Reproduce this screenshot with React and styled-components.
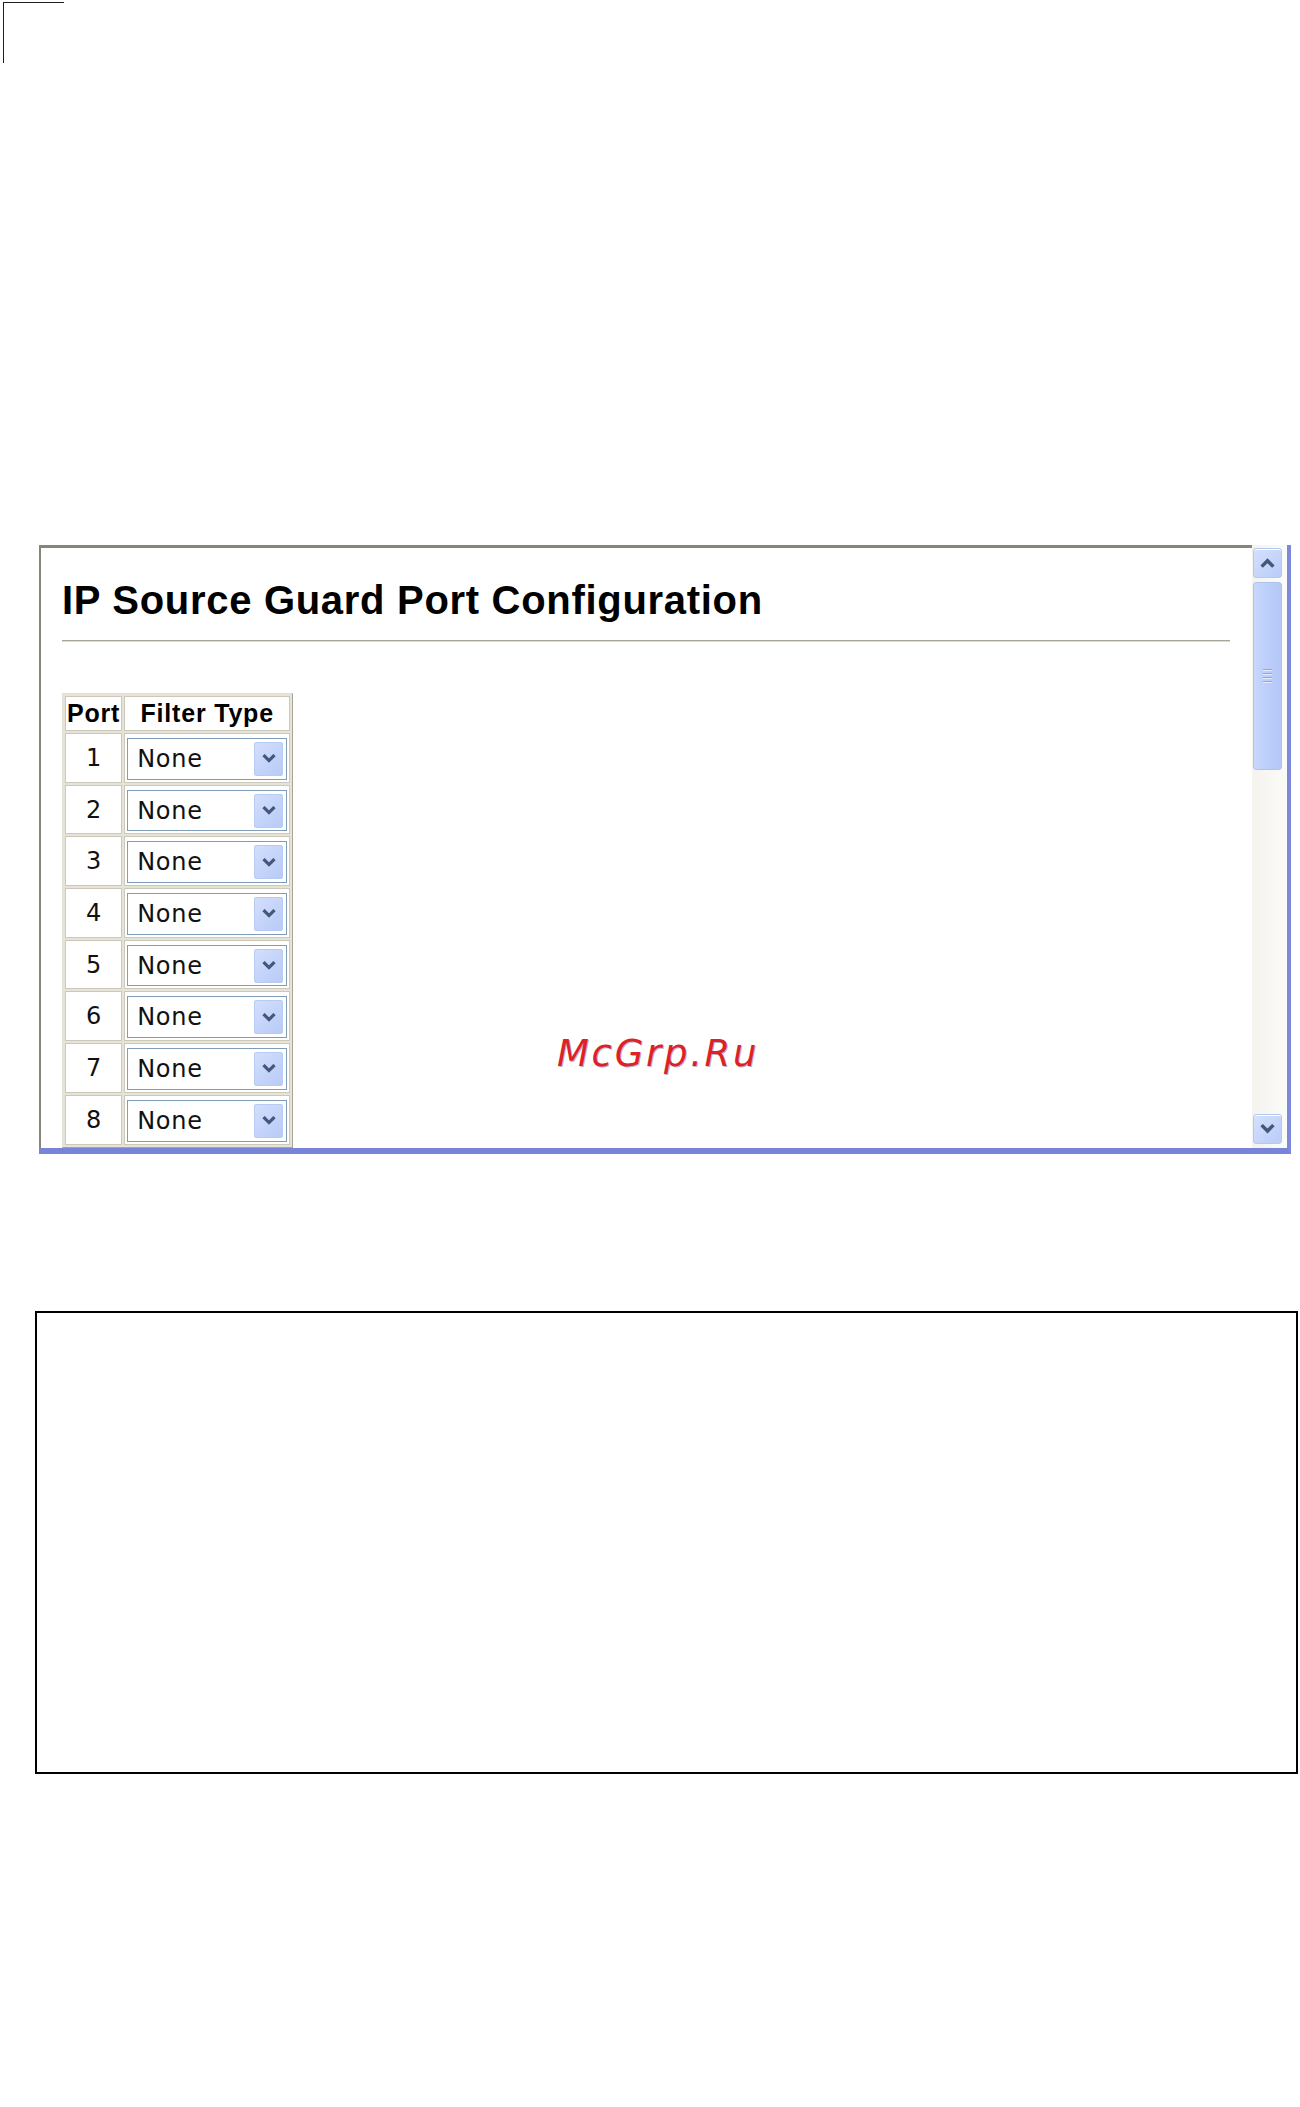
import React from "react";
import styled, { createGlobalStyle } from "styled-components";

const GlobalStyle = createGlobalStyle`
	html, body {
		margin: 0;
		padding: 0;
		background: #ffffff;
	}
	body {
		font-family: "Liberation Sans", Arial, sans-serif;
	}
`;

const ports = [1, 2, 3, 4, 5, 6, 7, 8];

const Chevron = ({ up, size = 15 }) => (
	<svg width={size} height={size * 0.65} viewBox="0 0 14 9">
		<polyline
			points={up ? "1.5,8 7,2.5 12.5,8" : "1.5,1 7,6.5 12.5,1"}
			fill="none"
			stroke="#45577a"
			strokeWidth="3.2"
		/>
	</svg>
);

const App = () => {
	return (
		<Page>
			<GlobalStyle />
			<CropMark />

			<Panel>
				<Viewport>
					<Title>IP Source Guard Port Configuration</Title>
					<Rule />

					<Grid>
						<thead>
							<tr>
								<HeadCell>Port</HeadCell>
								<HeadCell>Filter Type</HeadCell>
							</tr>
						</thead>
						<tbody>
							{ports.map((port) => (
								<tr key={port}>
									<PortCell>{port}</PortCell>
									<SelectCell>
										<Select>
											<span>None</span>
											<DropButton>
												<Chevron size={14} />
											</DropButton>
										</Select>
									</SelectCell>
								</tr>
							))}
						</tbody>
					</Grid>
				</Viewport>

				<Scrollbar>
					<ScrollButton>
						<Chevron up />
					</ScrollButton>
					<Thumb>
						<Grip>
							<i />
							<i />
							<i />
							<i />
						</Grip>
					</Thumb>
					<Track />
					<ScrollButton>
						<Chevron />
					</ScrollButton>
				</Scrollbar>

				<Watermark>McGrp.Ru</Watermark>
			</Panel>

			<NoteBox />
		</Page>
	);
};

// # STYLED COMPONENTS

const Page = styled.div`
	position: relative;
	width: 1300px;
	min-height: 2107px;
	overflow: hidden;
`;

const CropMark = styled.div`
	width: 60px;
	height: 60px;
	margin: 2px 0 0 3px;
	border-top: 1px solid #231f20;
	border-left: 1px solid #231f20;
`;

const Panel = styled.div`
	position: relative;
	display: flex;
	box-sizing: border-box;
	width: 1252px;
	height: 609px;
	margin: 482px 0 0 39px;
	border-right: 4px solid #7d89dc;
	border-bottom: 6px solid #7784d8;
	box-shadow: inset 0 -1px 0 #aab2ee;
`;

const Viewport = styled.div`
	flex: 1;
	overflow: hidden;
	padding: 0 22px 0 21px;
	border-top: 3px solid #87857a;
	border-left: 2px solid #87857a;
	background: #ffffff;
`;

const Title = styled.h1`
	margin: 32px 0 0;
	font-family: "Liberation Sans", Arial, sans-serif;
	font-size: 40px;
	line-height: 1;
	font-weight: bold;
	letter-spacing: 0.7px;
	color: #000000;
	white-space: nowrap;
`;

const Rule = styled.div`
	height: 1px;
	margin-top: 20px;
	background: #aaa696;
	border-bottom: 1px solid #dcd9ce;
`;

const Grid = styled.table`
	margin-top: 51px;
	border-collapse: separate;
	border-spacing: 2px;
	border: 1px solid;
	border-color: #e2dfd4 #a9a595 #a9a595 #e2dfd4;
	background: #e6e3d8;
	font-family: "DejaVu Sans", Verdana, sans-serif;
`;

const HeadCell = styled.th`
	height: 33px;
	padding: 0 1px;
	border: 1px solid #cdc9ba;
	background: #ffffff;
	font-family: "Liberation Sans", Arial, sans-serif;
	font-size: 25px;
	font-weight: bold;
	letter-spacing: 0.8px;
	text-align: center;
	white-space: nowrap;
	color: #000000;
`;

const PortCell = styled.td`
	width: 55px;
	padding: 0;
	border: 1px solid #cdc9ba;
	background: #ffffff;
	font-size: 24px;
	text-align: center;
	color: #111111;
`;

const SelectCell = styled.td`
	padding: 4px 2px 2px;
	border: 1px solid #cdc9ba;
	background: #ffffff;
`;

const Select = styled.div`
	position: relative;
	display: flex;
	align-items: center;
	box-sizing: border-box;
	width: 160px;
	height: 41.7px;
	padding: 0 0 0 9px;
	border: 1px solid #7f9db9;
	box-shadow: inset 0 0 0 1px #ffffff;
	background: #ffffff;
	font-size: 24px;
	letter-spacing: 0.7px;
	color: #111111;

	span {
		flex: 1;
	}
`;

const DropButton = styled.div`
	display: flex;
	align-items: center;
	justify-content: center;
	box-sizing: border-box;
	width: 29px;
	height: 34px;
	margin-right: 3px;
	border: 1px solid #b9cbf3;
	border-radius: 2px;
	background: linear-gradient(135deg, #d2defd 0%, #b8cbf7 100%);
`;

const Scrollbar = styled.div`
	display: flex;
	flex-direction: column;
	width: 35px;
	padding: 3px 5px 4px 1px;
	box-sizing: border-box;
	background: linear-gradient(90deg, #f4f3ee 0%, #fbfbf8 100%);
`;

const ScrollButton = styled.div`
	display: flex;
	align-items: center;
	justify-content: center;
	box-sizing: border-box;
	height: 30px;
	border: 1px solid #b6c8f2;
	border-radius: 3px;
	background: linear-gradient(135deg, #d4e0fd 0%, #b9ccf8 100%);
	box-shadow: 0 1px 0 #ffffff inset;
`;

const Thumb = styled.div`
	display: flex;
	align-items: center;
	justify-content: center;
	box-sizing: border-box;
	height: 188px;
	margin-top: 4px;
	border: 1px solid #aec2f0;
	border-radius: 3px;
	background: linear-gradient(90deg, #c8d7fc 0%, #bccefa 50%, #b4c7f6 100%);
`;

const Grip = styled.div`
	display: flex;
	flex-direction: column;
	gap: 2px;

	i {
		display: block;
		width: 9px;
		height: 1px;
		background: #8fa6e6;
		border-bottom: 1px solid #e4ebff;
	}
`;

const Track = styled.div`
	flex: 1;
`;

const Watermark = styled.div`
	position: absolute;
	left: 518px;
	top: 490px;
	font-family: "DejaVu Sans", Verdana, sans-serif;
	font-style: italic;
	font-size: 37px;
	line-height: 1;
	letter-spacing: 2.7px;
	color: #dc2226;
	text-shadow: 1px 1px 0 rgba(60, 40, 120, 0.35);
`;

const NoteBox = styled.div`
	box-sizing: border-box;
	width: 1263px;
	height: 463px;
	margin: 157px 0 0 35px;
	border: 2px solid #000000;
`;

export default App;
